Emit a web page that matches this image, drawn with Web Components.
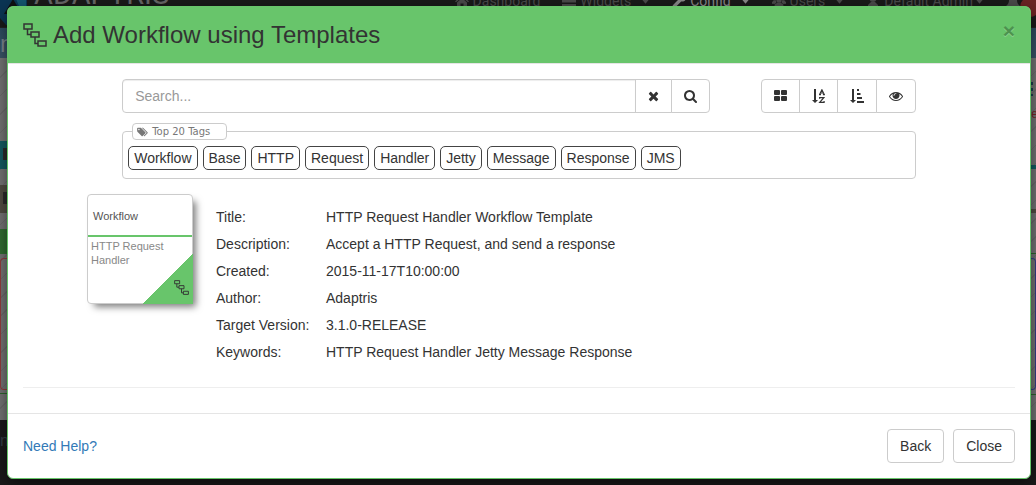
<!DOCTYPE html>
<html lang="en">
<head>
<meta charset="utf-8">
<title>Add Workflow using Templates</title>
<style>
  body {
    margin: 0;
    font: 14px/20px "Liberation Sans", Arial, sans-serif;
    color: #333;
    background: #161616;
  }
</style>
</head>
<body>
<workflow-page></workflow-page>

<script>
const define = (name, html, setup) => {
  const template = document.createElement('template');
  template.innerHTML = '<style>:host, *, *::before, *::after { box-sizing: border-box; }</style>' + html;
  customElements.define(name, class extends HTMLElement {
    constructor() {
      super();
      this.attachShadow({ mode: 'open' }).append(template.content.cloneNode(true));
    }
    connectedCallback() {
      if (setup) setup(this, this.shadowRoot);
    }
  });
};

const ICONS = {
  flow: ['1 1 24 24', '<g fill="none" stroke="currentColor" stroke-width="1.500"><path d="M2 2h8v5H2zM9 10h8v5H9zM16 19h8v5h-8z"/><path d="M5.500 7v5.500H9M13 15v6.500h3"/></g>'],
  times: ['192 0 1408 1792', '<path d="M1490 1322q0 40-28 68l-136 136q-28 28-68 28t-68-28l-294-294-294 294q-28 28-68 28t-68-28l-136-136q-28-28-28-68t28-68l294-294-294-294q-28-28-28-68t28-68l136-136q28-28 68-28t68 28l294 294 294-294q28-28 68-28t68 28l136 136q28 28 28 68t-28 68l-294 294 294 294q28 28 28 68z"/>'],
  search: ['64 0 1664 1792', '<path d="M1216 832q0-185-131.500-316.500t-316.500-131.500-316.500 131.500-131.500 316.500 131.500 316.500 316.500 131.500 316.500-131.500 131.500-316.500zm512 832q0 52-38 90t-90 38q-54 0-90-38l-343-342q-179 124-399 124-143 0-273.500-55.500t-225-150-150-225-55.500-273.500 55.500-273.500 150-225 225-150 273.500-55.500 273.500 55.500 225 150 150 225 55.500 273.500q0 220-124 399l343 343q37 37 37 90z"/>'],
  large: ['0 0 13 14', '<rect x="0" y="1" width="6" height="5" rx="1"/><rect x="7" y="1" width="6" height="5" rx="1"/><rect x="0" y="7" width="6" height="5" rx="1"/><rect x="7" y="7" width="6" height="5" rx="1"/>'],
  alpha: ['0 0 13 14', '<path d="M2 0h2v11h2L3 14 0 11h2z"/><g fill="none" stroke="currentColor" stroke-width="1.200"><path d="M7.600 5.500L9.900 .8l2.300 4.700M8.500 4h2.900M7 5.600h2M10.900 5.600h2M7.600 9.800V8.600h4.200L7.700 13.300h4.400V12"/></g>'],
  amount: ['0 0 14 14', '<path d="M2 0h2v11h2L3 14 0 11h2zM7 0h2v2H7zM7 4h3.500v2H7zM7 8h5v2H7zM7 12h7v2H7z"/>'],
  eye: ['0 0 1792 1792', '<path d="M1664 960q-152-236-381-353 61 104 61 225 0 185-131.500 316.500t-316.500 131.500-316.500-131.500-131.500-316.500q0-121 61-225-229 117-381 353 133 205 333.500 326.500t434.500 121.500 434.500-121.500 333.500-326.500zm-720-384q0-20-14-34t-34-14q-125 0-214.500 89.500t-89.500 214.500q0 20 14 34t34 14 34-14 14-34q0-86 61-147t147-61q20 0 34-14t14-34zm848 384q0 34-20 69-140 230-376.500 368.500t-499.500 138.500-499.500-139-376.500-368q-20-35-20-69t20-69q140-229 376.500-368t499.500-139 499.500 139 376.500 368q20 35 20 69z"/>'],
  tags: ['0 0 1920 1792', '<path d="M448 448q0-53-37.500-90.500t-90.500-37.500-90.500 37.500-37.500 90.500 37.500 90.500 90.500 37.500 90.500-37.500 37.500-90.500zm1067 576q0 53-37 90l-491 492q-39 37-91 37-53 0-90-37l-715-716q-38-37-64.500-101t-26.500-117v-416q0-52 38-90t90-38h416q53 0 117 26.500t102 64.500l715 714q37 39 37 91zm384 0q0 53-37 90l-491 492q-39 37-91 37-36 0-59-14t-53-45l470-470q37-37 37-90 0-52-37-91l-715-714q-38-38-102-64.500t-117-26.500h224q53 0 117 26.500t102 64.500l715 714q37 39 37 91z"/>'],
  home: ['0 0 14 14', '<path d="M7 1l7 6.500-1 .8L7 3 1 8.300l-1-.8zM2 8.500L7 4l5 4.500V13H8.500V9.500h-3V13H2z"/>'],
  list: ['0 0 14 14', '<path d="M0 1h14v3H0zM0 5.500h14v3H0zM0 10h14v3H0z"/>'],
  wrench: ['0 0 14 14', '<path d="M1 11l6-6c-.6-2.500 1-5 4-4.800L9.500 2.500l.5 2 2 .5L14 3.500c.2 3-2.300 4.500-4.800 4l-6 6c-1.400 1.200-3.400-1-2.200-2.500z"/>'],
  group: ['0 0 16 14', '<circle cx="3" cy="4.500" r="2"/><circle cx="13" cy="4.500" r="2"/><circle cx="8" cy="6" r="3"/><path d="M0 10V8l2-1.500h2.500L5 9l-2 1.500zM16 10V8l-2-1.500h-2.500L11 9l2 1.500zM3 14v-3l3-2h4l3 2v3z"/>'],
  user: ['0 0 14 14', '<circle cx="7" cy="4.500" r="3.500"/><path d="M2 14v-3l3-3h4l3 3v3z"/>'],
  bell: ['0 0 14 14', '<path d="M7 0c3 1 4 3 4 6s1 4 3 6H0c2-2 3-3 3-6s1-5 4-6z"/>'],
  caret: ['0 0 10 6', '<path d="M0 0h10L5 6z"/>'],
  logo: ['0 0 30 26', '<path fill="#0b3554" d="M0 0h27v14L15 26H6L0 19z"/><path fill="#0f0f12" d="M13 0l9 15H4z"/><path fill="#14566f" d="M16 0h10v9l-4 5z"/>']
};

define('ui-icon', `
  <style>
    :host { display: inline-block; flex: none; width: 14px; height: 14px; }
    svg { display: block; width: 100%; height: 100%; fill: currentColor; }
  </style>
  <svg aria-hidden="true"></svg>`,
  (host, root) => {
    const [box, shapes] = ICONS[host.getAttribute('name')];
    const svg = root.querySelector('svg');
    svg.setAttribute('viewBox', box);
    svg.innerHTML = shapes;
  });

/* The application behind the dialog, dimmed by the modal backdrop. */
define('app-backdrop', `
  <style>
    :host {
      display: grid; grid-template-rows: 28px 32px 1fr 65px;
      position: absolute; inset: 0; overflow: hidden; color: #4a4a4a;
    }
    nav {
      display: flex; align-items: flex-end; padding-bottom: 18px;
      background: #1a1a1a; font: 14px/16px Roboto, sans-serif; white-space: nowrap;
      overflow: hidden; border-bottom: 1px solid #222;
    }
    .logo { width: 30px; height: 26px; margin-bottom: -16px; }
    .brand { font-size: 29px; line-height: 29px; color: #666; margin: 0 auto 0 4px; }
    .menu { display: flex; gap: 22px; }
    .menu > span { display: flex; align-items: center; gap: 4px; }
    .caret { width: 9px; height: 6px; margin-left: 6px; }
    .near { margin-left: -2px; }
    .active { color: #888; }
    .count { width: 20px; height: 20px; margin: 0 -4px -8px 0; border-radius: 10px; background: #6b2424; }
    .title {
      background: linear-gradient(#2d4c60, #3b5467); color: #7b858d; border-bottom: 2px solid #777;
      font-size: 24px; line-height: 32px; display: flex; overflow: hidden;
    }
    main {
      display: flex; justify-content: space-between;
      background: repeating-linear-gradient(135deg, #737373 0 12px, #6a6a6a 12px 13px);
    }
    .side { width: 7px; overflow: hidden; }
    .right { width: 5px; }
    .teal { background: #155a61; }
    .mark { width: 4px; height: 12px; margin: 7px 0 9px 3px; background: #2b2b2b; }
    .olive { background: #504d42; }
    .green { background: #316d31; }
    .well-l { border: 1px solid #923c3c; border-right: 0; border-radius: 4px 0 0 4px; }
    .well-r { border: 1px solid #343c86; border-left: 0; border-radius: 0 4px 4px 0; }
    .rule { border-bottom: 1px solid #2d642d; }
    .dots { width: 2px; height: 14px; background: repeating-linear-gradient(#1c3c50 0 3px, transparent 3px 6px); }
    .red { height: 20px; margin: 9px 0 40px; color: #7a2424; font: 12px/20px "Liberation Mono", monospace; }
    footer { background: #1a1a1a; color: #333c44; display: flex; align-items: center; font-size: 16px; padding-bottom: 24px; }
  </style>
  <nav>
    <ui-icon class="logo" name="logo"></ui-icon>
    <span class="brand">ADAPTRIS</span>
    <div class="menu">
      <span><ui-icon name="home"></ui-icon>Dashboard</span>
      <span><ui-icon name="list"></ui-icon>Widgets <ui-icon class="caret" name="caret"></ui-icon></span>
      <span class="active"><ui-icon name="wrench"></ui-icon>Config <ui-icon class="caret" name="caret"></ui-icon></span>
      <span><ui-icon name="group"></ui-icon>Users <ui-icon class="caret" name="caret"></ui-icon></span>
      <span><ui-icon name="user"></ui-icon>Default Admin <ui-icon class="caret near" name="caret"></ui-icon></span>
      <span><ui-icon name="bell"></ui-icon></span>
    </div>
    <span class="count"></span>
  </nav>
  <div class="title">n</div>
  <main>
    <div class="side">
      <div style="height:81px"></div>
      <div class="teal" style="height:28px; overflow:hidden"><div class="mark"></div></div>
      <div style="height:16px"></div>
      <div class="olive" style="height:28px; overflow:hidden"><div class="mark"></div></div>
      <div style="height:16px"></div>
      <div class="green" style="height:25px"></div>
      <div style="height:4px"></div>
      <div class="well-l" style="height:132px"></div>
      <div class="rule" style="height:4px"></div>
    </div>
    <div class="side right">
      <div style="height:22px"></div>
      <div class="dots"></div>
      <div class="red">e</div>
      <div class="teal" style="height:4px"></div>
      <div style="height:40px"></div>
      <div class="olive" style="height:4px"></div>
      <div class="rule" style="height:41px"></div>
      <div style="height:4px"></div>
      <div class="well-r" style="height:132px"></div>
      <div class="rule" style="height:5px"></div>
    </div>
  </main>
  <footer>nt</footer>`);

define('modal-dialog', `
  <style>
    :host {
      display: block; position: relative; background: #fff;
      border: 1px solid #68c56b; border-radius: 6px; box-shadow: 0 5px 15px rgba(0,0,0,.5);
    }
    header {
      display: flex; align-items: center; gap: 6px; padding: 15px;
      background: #68c56b; border-bottom: 1px solid #e5e5e5; border-radius: 4px 4px 0 0;
    }
    header ui-icon { width: 24px; height: 24px; }
    h4 { margin: 0; font-size: 24px; line-height: 26px; font-weight: 500; flex: 1; }
    .x {
      border: 0; padding: 0; background: none; color: #000; opacity: .25; text-shadow: 0 1px 0 #fff;
      font: bold 21px/21px "Liberation Sans", Arial, sans-serif; align-self: flex-start; margin-top: -2px;
    }
    section { padding: 15px 15px 25px; }
    footer {
      display: flex; align-items: center; gap: 9px; padding: 15px;
      border-top: 1px solid #e5e5e5;
    }
    a { color: #337ab7; text-decoration: none; margin-right: auto; }
    footer button {
      font: inherit; color: #333; background: #fff; border: 1px solid #ccc;
      border-radius: 4px; padding: 6px 12px;
    }
  </style>
  <header>
    <ui-icon name="flow"></ui-icon>
    <h4><slot name="title"></slot></h4>
    <button class="x" aria-label="Dismiss">×</button>
  </header>
  <section><slot></slot></section>
  <footer>
    <a href="#help">Need Help?</a>
    <button>Back</button>
    <button>Close</button>
  </footer>`);

define('search-bar', `
  <style>
    :host { display: flex; gap: 51px; }
    .group { display: flex; }
    .find { flex: 1; }
    input {
      flex: 1; min-width: 0; height: 34px; padding: 6px 12px; font: inherit; color: #555;
      border: 1px solid #ccc; border-radius: 4px 0 0 4px; box-shadow: inset 0 1px 1px rgba(0,0,0,.075);
    }
    input::placeholder { color: #999; opacity: 1; }
    button {
      display: flex; align-items: center; height: 34px; padding: 0 12px; margin-left: -1px;
      color: #333; background: #fff; border: 1px solid #ccc;
    }
    .w11 { width: 11px; }
    .w13 { width: 13px; }
    .tools button:first-child { border-radius: 4px 0 0 4px; margin-left: 0; }
    button:last-child { border-radius: 0 4px 4px 0; }
  </style>
  <div class="group find">
    <input type="text" placeholder="Search..." aria-label="Search">
    <button aria-label="Clear"><ui-icon class="w11" name="times"></ui-icon></button>
    <button aria-label="Search"><ui-icon class="w13" name="search"></ui-icon></button>
  </div>
  <div class="group tools">
    <button aria-label="Tiles"><ui-icon class="w13" name="large"></ui-icon></button>
    <button aria-label="Sort by name"><ui-icon class="w13" name="alpha"></ui-icon></button>
    <button aria-label="Sort by amount"><ui-icon name="amount"></ui-icon></button>
    <button aria-label="Preview"><ui-icon name="eye"></ui-icon></button>
  </div>`);

define('tag-list', `
  <style>
    :host { display: block; }
    fieldset { margin: 0; min-width: 0; padding: 6px 5px 8px; border: 1px solid #ccc; border-radius: 4px; }
    legend {
      display: flex; align-items: center; gap: 4px; width: 95px; height: 17px; margin-left: 4px; padding: 0 4px;
      border: 1px solid #ccc; border-radius: 4px; color: #777; font: 10px/15px "DejaVu Sans", Verdana, sans-serif;
    }
    legend ui-icon { width: 11px; height: 10px; }
    div { display: flex; flex-wrap: wrap; gap: 5px; }
  </style>
  <fieldset>
    <legend><ui-icon name="tags"></ui-icon>Top 20 Tags</legend>
    <div><slot></slot></div>
  </fieldset>`);

define('tag-button', `
  <style>
    :host { display: block; }
    button {
      display: block; font: inherit; color: #333; background: #fff; border: 1px solid #444;
      border-radius: 5px; padding: 1px 5px;
    }
  </style>
  <button><slot></slot></button>`);

define('template-card', `
  <style>
    :host {
      display: flex; flex-direction: column; position: relative; width: 106px; height: 110px;
      background: #fff; border: 1px solid #ccc; border-radius: 4px;
      box-shadow: 5px 5px 7px -2px rgba(0,0,0,.5); font-size: 11px; line-height: 14px;
    }
    .kind { padding: 14px 5px 12px; border-bottom: 2px solid #68c56b; color: #555; }
    .name { padding: 2px 3px; color: #888; }
    .corner {
      position: absolute; right: -1px; bottom: -1px; width: 50px; height: 50px; padding: 26px 4px 0 31px;
      background: linear-gradient(135deg, transparent 50%, #68c56b 50%); color: #333;
    }
    .corner ui-icon { width: 15px; height: 15px; }
  </style>
  <div class="kind"><slot name="kind"></slot></div>
  <div class="name"><slot></slot></div>
  <div class="corner"><ui-icon name="flow"></ui-icon></div>`);

define('template-details', `
  <style>
    :host { display: block; }
    table { border-collapse: collapse; }
    th, td { padding: 0 0 7px; text-align: left; font-weight: 400; vertical-align: top; }
    th { width: 110px; }
  </style>
  <table>
    <tr><th scope="row">Title:</th><td>HTTP Request Handler Workflow Template</td></tr>
    <tr><th scope="row">Description:</th><td>Accept a HTTP Request, and send a response</td></tr>
    <tr><th scope="row">Created:</th><td>2015-11-17T10:00:00</td></tr>
    <tr><th scope="row">Author:</th><td>Adaptris</td></tr>
    <tr><th scope="row">Target Version:</th><td>3.1.0-RELEASE</td></tr>
    <tr><th scope="row">Keywords:</th><td>HTTP Request Handler Jetty Message Response</td></tr>
  </table>`);

define('workflow-page', `
  <style>
    :host { display: block; position: relative; min-height: 100vh; padding: 6px 5px 6px 7px; }
    .filters { width: 80%; margin: 0 auto; }
    tag-list { margin-top: 10px; }
    .result { display: flex; gap: 23px; padding: 15px 0 0 64px; }
    template-details { padding-top: 13px; }
    hr { margin: 18px 0 0; border: 0; border-top: 1px solid #eee; }
  </style>
  <app-backdrop aria-hidden="true"></app-backdrop>
  <modal-dialog role="dialog" aria-label="Add Workflow using Templates">
    <span slot="title">Add Workflow using Templates</span>
    <div class="filters">
      <search-bar></search-bar>
      <tag-list>
        <tag-button>Workflow</tag-button>
        <tag-button>Base</tag-button>
        <tag-button>HTTP</tag-button>
        <tag-button>Request</tag-button>
        <tag-button>Handler</tag-button>
        <tag-button>Jetty</tag-button>
        <tag-button>Message</tag-button>
        <tag-button>Response</tag-button>
        <tag-button>JMS</tag-button>
      </tag-list>
    </div>
    <div class="result">
      <template-card><span slot="kind">Workflow</span>HTTP Request Handler</template-card>
      <template-details></template-details>
    </div>
    <hr>
  </modal-dialog>`);
</script>
</body>
</html>
